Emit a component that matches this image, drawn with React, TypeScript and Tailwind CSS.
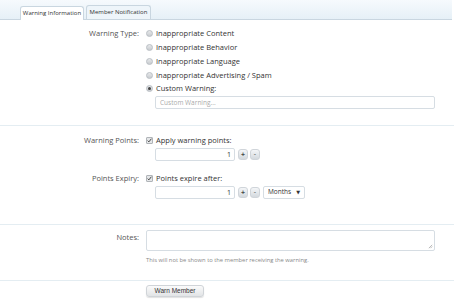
import { useState } from 'react';

const options = [
  'Inappropriate Content',
  'Inappropriate Behavior',
  'Inappropriate Language',
  'Inappropriate Advertising / Spam',
  'Custom Warning:',
];

function Radio({ checked }: { checked: boolean }) {
  return (
    <span className="w-[7px] h-[7px] rounded-full border border-[#b9bec4] bg-gradient-to-b from-[#e6e8ea] to-[#c9ccd0] flex items-center justify-center shrink-0">
      {checked && <span className="w-[3px] h-[3px] rounded-full bg-[#444]" />}
    </span>
  );
}

function Check() {
  return (
    <span className="w-[7px] h-[7px] rounded-[1px] border border-[#b0b4b8] bg-[#e4e6e8] flex items-center justify-center shrink-0">
      <svg viewBox="0 0 8 8" className="w-[7px] h-[7px]">
        <path d="M1 4.2 L3 6.2 L7 1.2" stroke="#333" strokeWidth="1.4" fill="none" />
      </svg>
    </span>
  );
}

function Stepper({ value }: { value: string }) {
  return (
    <div className="flex items-center gap-[2px]">
      <div className="w-[80px] h-[13px] border border-[#d6dde3] rounded-[2px] bg-white text-right pr-[3px] text-[7px] leading-[11px] text-[#333]">
        {value}
      </div>
      <span className="ml-[1px] w-[10px] h-[11px] rounded-[3px] bg-gradient-to-b from-[#f4f6f8] to-[#d4d9de] border border-[#d0d5da] text-[7px] leading-[9px] text-center text-[#444] font-bold">+</span>
      <span className="w-[10px] h-[11px] rounded-[3px] bg-gradient-to-b from-[#f4f6f8] to-[#d4d9de] border border-[#d0d5da] text-[7px] leading-[8px] text-center text-[#444]">-</span>
    </div>
  );
}

function Row({ label, children, labelTop = 'pt-0' }: { label: string; children: React.ReactNode; labelTop?: string }) {
  return (
    <div className="flex">
      <div className={`w-[139px] text-right text-[7.5px] leading-[13px] text-[#555] ${labelTop}`}>{label}</div>
      <div className="ml-[7px] flex-1">{children}</div>
    </div>
  );
}

export default function App() {
  const [type] = useState(4);

  return (
    <div className="w-[454px] h-[300px] bg-white overflow-hidden text-[#333]" style={{ fontFamily: '"Open Sans", "DejaVu Sans", sans-serif' }}>
      <div className="h-[20px] w-[452px] bg-gradient-to-b from-[#f6fafd] to-[#e6f0f7] border-b border-[#c9d6e0] flex items-end pl-[20px] gap-[2px]">
        <div className="h-[14px] w-[64px] text-center bg-white border border-[#c9d6e0] border-b-0 rounded-t-[3px] text-[6px] leading-[13px] text-[#333] -mb-[1px]">
          Warning Information
        </div>
        <div className="h-[14px] w-[65px] text-center bg-[#eef5fa] border border-[#c9d6e0] border-b-0 rounded-t-[3px] text-[6px] leading-[13px] text-[#333]">
          Member Notification
        </div>
      </div>

      <div className="pt-[7px] pb-[16px] border-b border-[#e4edf2]">
        <Row label="Warning Type:">
          <div className="flex flex-col">
            {options.map((o, i) => (
              <div key={o} className="flex items-center gap-[3px] h-[13.75px] text-[7.5px]">
                <Radio checked={i === type} />
                <span>{o}</span>
              </div>
            ))}
            <div className="ml-[9px] w-[280px] h-[13px] border border-[#d6dde3] rounded-[2px] text-[6.5px] leading-[11px] pl-[4px] text-[#aaa]">
              Custom Warning...
            </div>
          </div>
        </Row>
      </div>

      <div className="pt-[8px] pb-[25px] border-b border-[#e4edf2]">
        <Row label="Warning Points:">
          <div className="flex items-center gap-[3px] h-[13px] text-[7.5px]">
            <Check />
            <span>Apply warning points:</span>
          </div>
          <div className="ml-[9px] mt-[1px]">
            <Stepper value="1" />
          </div>
        </Row>
        <div className="h-[11px]" />
        <Row label="Points Expiry:">
          <div className="flex items-center gap-[3px] h-[13px] text-[7.5px]">
            <Check />
            <span>Points expire after:</span>
          </div>
          <div className="ml-[9px] mt-[1px] flex items-center gap-[3px]">
            <Stepper value="1" />
            <div className="w-[42px] h-[13px] border border-[#d6dde3] rounded-[2px] flex items-center justify-between px-[4px] text-[6.5px] text-[#333]">
              <span>Months</span>
              <span className="text-[5px]">▼</span>
            </div>
          </div>
        </Row>
      </div>

      <div className="pt-[5px] pb-[16px] border-b border-[#e4edf2]">
        <Row label="Notes:" labelTop="pt-[1px]">
          <div className="relative w-[289px] h-[21px] border border-[#d6dde3] rounded-[2px]">
            <svg viewBox="0 0 6 6" className="absolute right-[1px] bottom-[1px] w-[5px] h-[5px]">
              <path d="M1 5 L5 1 M3 5 L5 3" stroke="#888" strokeWidth="0.7" />
            </svg>
          </div>
          <div className="mt-[5px] text-[5.8px] text-[#888]">This will not be shown to the member receiving the warning.</div>
        </Row>
      </div>

      <div className="pt-[4px] pl-[146px] flex">
        <button className="w-[58px] h-[12px] rounded-[3px] border border-[#d0d4d8] bg-gradient-to-b from-[#fbfbfb] to-[#e2e4e6] text-[6.5px] leading-[10px] text-[#333] shadow-[0_1px_1px_rgba(0,0,0,0.12)]" style={{ fontFamily: '"Liberation Sans", Arial, sans-serif' }}>
          Warn Member
        </button>
      </div>
    </div>
  );
}
